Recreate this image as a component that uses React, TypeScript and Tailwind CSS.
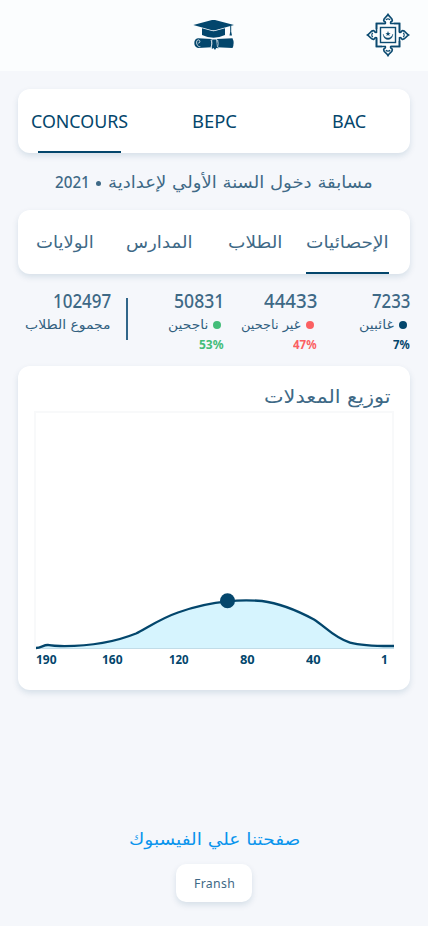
import { useLayoutEffect, useRef, useState } from "react";
import type { ReactNode } from "react";

const LATIN = "font-['Noto_Sans','Open_Sans',sans-serif]";
const ARABIC = "font-['DejaVu_Sans','Noto_Sans',sans-serif]";

/* One line of text condensed horizontally to a given width. */
function Fit({ w, className = "", rtl = false, children }: { w: number; className?: string; rtl?: boolean; children: ReactNode }) {
  const ref = useRef<HTMLSpanElement>(null);
  const [scale, setScale] = useState(1);
  useLayoutEffect(() => {
    if (ref.current) setScale(w / ref.current.offsetWidth);
  }, [w]);
  return (
    <span dir="ltr" className="block shrink-0" style={{ width: w }}>
      <span
        ref={ref}
        dir={rtl ? "rtl" : "ltr"}
        className={`block w-max origin-left whitespace-nowrap ${rtl ? ARABIC : LATIN} ${className}`}
        style={{ transform: `scaleX(${scale})` }}
      >
        {children}
      </span>
    </span>
  );
}

function Logo() {
  return (
    <svg width="44" height="44" viewBox="0 0 44 44" fill="none" stroke="#0b4a70" strokeWidth="1.6">
      {[0, 90, 180, 270].map((a) => (
        <g key={a} transform={`rotate(${a} 22 22)`}>
          <path d="M10.5 16V10.5H19.3C20 9 19 8.6 17.8 8C16.8 5.2 20.5 4.2 22 1.5C23.5 4.2 27.2 5.2 26.2 8C25 8.6 24 9 24.7 10.5H33.5V19" />
          <path d="M20 7C20.4 5.4 23.6 5.4 24 7" strokeWidth="1.2" />
        </g>
      ))}
      <rect x="14.5" y="14.5" width="15" height="15" strokeWidth="1.4" />
      <path d="M17.2 21C17.2 28.4 26.8 28.4 26.8 21C25.5 26.3 18.5 26.3 17.2 21Z" fill="#0b4a70" strokeWidth=".3" />
      <path d="M22 18L22.7 19.9H24.6L23.1 21.1L23.6 23L22 21.9L20.4 23L20.9 21.1L19.4 19.9H21.3Z" fill="#0b4a70" stroke="none" />
    </svg>
  );
}

function GraduationCap() {
  return (
    <svg width="42" height="32" viewBox="0 0 42 32" fill="#03466c">
      <path d="M.3 6L19 1.1Q20.5.8 22 1.1L41 6L22 11.2Q20.5 11.5 19 11.2Z" />
      <path d="M9 9.3L19 12.1Q20.5 12.4 22 12.1L32 9.3V16Q26 18.8 20.5 18.8Q15 18.8 9 16Z" />
      <path d="M37.2 6.8H38.2V12.8L39 16.5H36.5L37.2 12.8Z" />
      <path d="M5 19.2L18.6 20V28.3L5 28.9Q1.3 28 1.3 24Q1.3 19.7 5 19.2Z" />
      <path d="M23.8 20L39.5 19.2Q41.8 24 39.5 28.9L23.8 28.3Z" />
      <path d="M19.2 20.5H23.2L24 28L25.8 29.3L23.2 29.1L22 31L20.5 29.1L18.8 30L19 28Z" />
      <path d="M7.3 27.6C3.4 28.3 2.2 20.8 5.6 20.9C7.5 21.2 7.2 24.5 5.2 24M18 20.8C19.1 23.5 19.1 25.5 18 28M24.6 20.8Q25.6 24.5 24.6 28" fill="none" stroke="#fbfdfe" strokeWidth=".8" />
    </svg>
  );
}

function Stat({ value, vw, label, lw, percent, pw, dot = "", tone = "" }: { value: string; vw: number; label: string; lw: number; percent?: string; pw?: number; dot?: string; tone?: string }) {
  return (
    <div className="flex flex-col items-end">
      <Fit w={vw} className="text-[19px] leading-[26px] font-medium text-[#3e6986]">{value}</Fit>
      <div className="flex h-[22px] items-center">
        <Fit w={lw} rtl className="text-[12.5px] leading-[22px] text-[#31607f]">{label}</Fit>
        {dot && <span className={`mr-[3px] ml-[5px] size-2 rounded-full ${dot}`} />}
      </div>
      {percent && <Fit w={pw ?? 20} className={`text-[12px] leading-[18px] font-bold ${tone}`}>{percent}</Fit>}
    </div>
  );
}

const shadow = "shadow-[0_3px_6px_rgba(3,70,108,0.13)]";

const curve =
  "M36 648C41 648 44 644.6 48 645C52 645.6 54 646 60 646C85 646.4 110 644 136 633.5C145 629.5 159 619 178 612.5C194 606.8 212 602.8 228 601.4C239 600 250 600 262 601C282 603.5 300 612 314 619.5C324 625.5 334 638 350 642.6C364 646.3 378 646 394 646";

export default function App() {
  return (
    <div className="h-[926px] w-[428px] overflow-hidden bg-[#f5f7fb] text-[#03466c]">
      <header className="flex h-[71px] justify-between bg-[#fbfdfe] pt-[13px] pr-[18px] pl-[193px]">
        <div className="pt-[6px]"><GraduationCap /></div>
        <Logo />
      </header>

      <nav className={`mx-[18px] mt-[18px] flex h-16 justify-between rounded-[12px] bg-white pr-[19px] pl-5 ${shadow}`}>
        <div className="flex w-[83px] justify-center border-b-2 border-[#03466c] pt-[18px]">
          <Fit w={97} className="text-[18px] leading-7">CONCOURS</Fit>
        </div>
        <div className="flex w-[84px] justify-center pt-[18px]">
          <Fit w={45} className="text-[18px] leading-7">BEPC</Fit>
        </div>
        <div className="flex w-[84px] justify-center pt-[18px]">
          <Fit w={34} className="text-[18px] leading-7">BAC</Fit>
        </div>
      </nav>

      <div className="flex h-[57px] items-start pt-[16px] pl-[55px] text-[#3e6986]">
        <Fit w={35} className="text-[16.5px] leading-[26px] font-medium">2021</Fit>
        <span className="mt-3 ml-[6px] size-[5px] rounded-full bg-[#3e6986]" />
        <span className="w-[7px]" />
        <Fit w={265} rtl className="text-[16.5px] leading-7">مسابقة دخول السنة الأولي لإعدادية</Fit>
      </div>

      <nav className={`mx-[18px] flex h-16 rounded-[12px] bg-white pl-[18px] text-[#3e6986] ${shadow}`}>
        <div className="pt-[19px]"><Fit w={58} rtl className="text-[16.5px] leading-7">الولايات</Fit></div>
        <div className="ml-[32px] pt-[19px]"><Fit w={67} rtl className="text-[16.5px] leading-7">المدارس</Fit></div>
        <div className="ml-[35px] pt-[19px]"><Fit w={55} rtl className="text-[16.5px] leading-7">الطلاب</Fit></div>
        <div className="ml-[23px] w-[83px] border-b-2 border-[#03466c] pt-[19px]"><Fit w={83} rtl className="text-[16.5px] leading-7">الإحصائيات</Fit></div>
      </nav>

      <section className="flex h-[92px] items-start pt-[14px] pl-[25px]">
        <div className="w-[86px]"><Stat value="102497" vw={58} label="مجموع الطلاب" lw={86} /></div>
        <div className="mt-[10px] ml-[15px] h-[42px] w-[2px] bg-[#31668a]" />
        <div className="w-[96px]"><Stat value="50831" vw={50} label="ناجحين" lw={40} percent="53%" pw={25} dot="bg-[#43bd79]" tone="text-[#43bd79]" /></div>
        <div className="w-[93px]"><Stat value="44433" vw={53} label="غير ناجحين" lw={60} percent="47%" pw={24} dot="bg-[#fb6062]" tone="text-[#fb6062]" /></div>
        <div className="w-[93px]"><Stat value="7233" vw={38} label="غائبين" lw={35} percent="7%" pw={17} dot="bg-[#03466c]" tone="text-[#03466c]" /></div>
      </section>

      <section className={`mx-[18px] flex h-[324px] flex-col rounded-[12px] bg-white ${shadow}`}>
        <div className="flex h-[45px] justify-end pt-[15px] pr-[19px] text-[#3e6986]">
          <Fit w={127} rtl className="text-[18.5px] leading-8">توزيع المعدلات</Fit>
        </div>
        <svg className="ml-4 block shrink-0" width="360" height="239" viewBox="34 411 360 239" fill="none">
          <rect x="35" y="412" width="358" height="236" stroke="#f8f9fa" strokeWidth="2" />
          <path d={`${curve}V648Z`} fill="#d6f4fe" />
          <path d="M36 648.5H394" stroke="#c1dce8" strokeWidth="1" />
          <path d={curve} stroke="#03466c" strokeWidth="2.3" />
          <circle cx="227.5" cy="600.8" r="7.5" fill="#03466c" />
        </svg>
        <div className="flex pt-[1px] pl-[18px] text-[12px] leading-[18px] font-bold">
          <Fit w={21}>190</Fit>
          <span className="w-[45px]" />
          <Fit w={21}>160</Fit>
          <span className="w-[46px]" />
          <Fit w={20}>120</Fit>
          <span className="w-[51px]" />
          <Fit w={15}>80</Fit>
          <span className="w-[51px]" />
          <Fit w={15}>40</Fit>
          <span className="w-[60px]" />
          <Fit w={7}>1</Fit>
        </div>
      </section>

      <footer className="flex flex-col items-center pt-[136px]">
        <div className="h-[38px] text-[#0894ed]">
          <Fit w={171} rtl className="text-[16.5px] leading-7">صفحتنا علي الفيسبوك</Fit>
        </div>
        <button className={`flex h-[38px] w-[76px] items-center justify-center rounded-[10px] bg-white text-[#3e6986] ${shadow}`}>
          <Fit w={41} className="pt-[1px] text-[12px] leading-5 tracking-[.3px]">Fransh</Fit>
        </button>
      </footer>
    </div>
  );
}
